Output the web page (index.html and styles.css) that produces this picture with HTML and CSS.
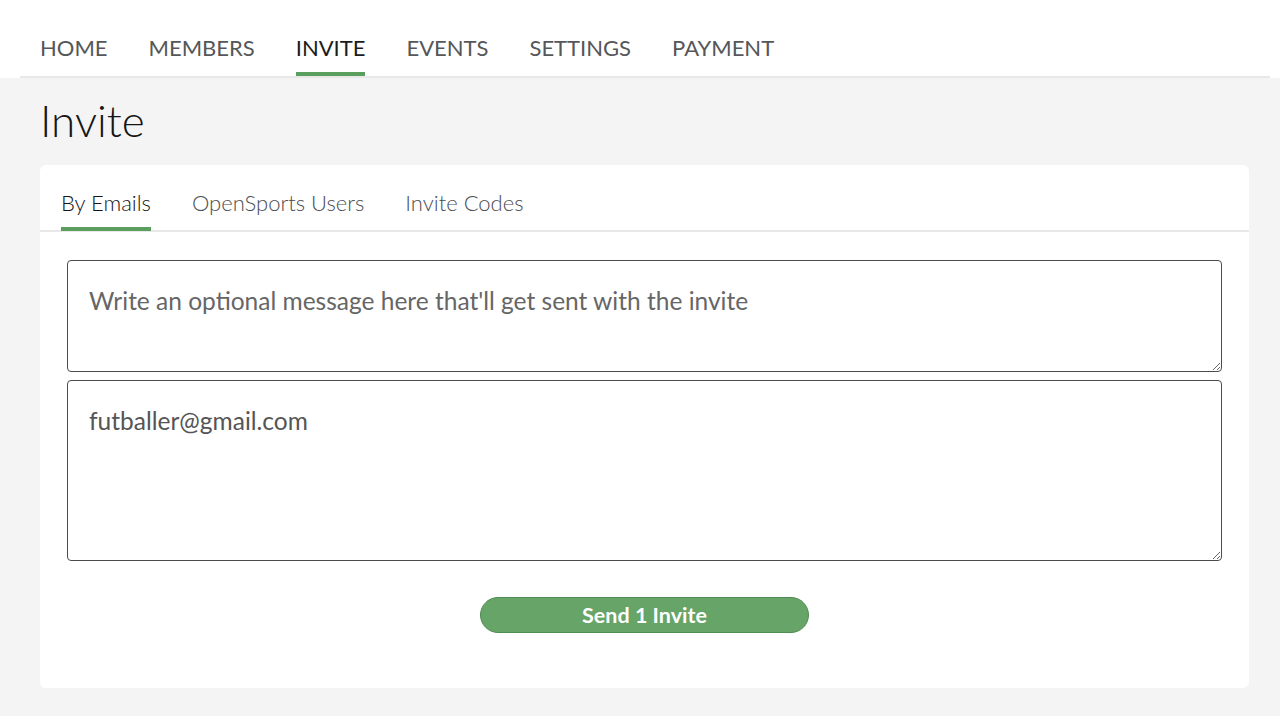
FILE: index.html
```html
<!DOCTYPE html>
<html lang="en">
<head>
<meta charset="utf-8">
<title>Invite</title>
<link rel="stylesheet" href="styles.css">
</head>
<body>
<header class="topbar">
  <nav class="mainnav">
    <a class="navlink" href="#">HOME</a>
    <a class="navlink" href="#">MEMBERS</a>
    <a class="navlink active" href="#">INVITE</a>
    <a class="navlink" href="#">EVENTS</a>
    <a class="navlink" href="#">SETTINGS</a>
    <a class="navlink" href="#">PAYMENT</a>
  </nav>
</header>
<main class="page">
  <h1 class="title">Invite</h1>
  <section class="card">
    <div class="tabs">
      <a class="tab active" href="#">By Emails</a>
      <a class="tab" href="#">OpenSports Users</a>
      <a class="tab" href="#">Invite Codes</a>
    </div>
    <div class="cardbody">
      <textarea class="field message" placeholder="Write an optional message here that'll get sent with the invite"></textarea>
      <textarea class="field emails">futballer@gmail.com</textarea>
      <div class="actions">
        <button class="sendbtn" type="button">Send 1 Invite</button>
      </div>
    </div>
  </section>
</main>
</body>
</html>
```

FILE: styles.css
```css
html, body {
  margin: 0;
  padding: 0;
}
body {
  background: #f4f4f4;
  font-family: Lato, "Open Sans", "Liberation Sans", sans-serif;
  color: #222;
}
.topbar {
  background: #ffffff;
  padding: 0 10px 0 20px;
}
.mainnav {
  display: flex;
  gap: 41px;
  padding-left: 20px;
  border-bottom: 2px solid #e8e8e8;
}
.navlink {
  display: block;
  font-size: 22px;
  line-height: 1.2;
  padding: 35px 0 11px;
  border-bottom: 4px solid transparent;
  color: #555759;
  text-decoration: none;
}
.navlink.active {
  color: #1c1c1c;
  border-bottom-color: #5b9f5e;
}
.page {
  padding: 0 31px 28px 40px;
}
.title {
  margin: 16px 0 18px;
  font-size: 44px;
  font-weight: 300;
  line-height: 1.2;
  color: #151515;
}
.card {
  background: #ffffff;
  border-radius: 6px;
}
.tabs {
  display: flex;
  gap: 41px;
  padding: 0 21px;
  border-bottom: 2px solid #e8e8e8;
}
.tab {
  display: block;
  font-size: 22px;
  font-weight: 300;
  line-height: 1.2;
  padding: 25px 0 10px;
  border-bottom: 4px solid transparent;
  color: #4a4d52;
  text-decoration: none;
  margin-bottom: -1px;
}
.tab.active {
  color: #151515;
  border-bottom-color: #5b9f5e;
}
.cardbody {
  padding: 28px 27px 55px;
}
.field {
  display: block;
  box-sizing: border-box;
  width: 100%;
  margin: 0;
  border: 1px solid #4c4c4c;
  border-radius: 4px;
  padding: 25px 21px;
  font-family: Lato, "Open Sans", "Liberation Sans", sans-serif;
  font-size: 24.5px;
  line-height: 1.2;
  color: #555555;
  background: #ffffff;
}
.field::placeholder {
  color: #666666;
  opacity: 1;
}
.message {
  height: 112px;
}
.emails {
  height: 181px;
  margin-top: 8px;
}
.actions {
  display: flex;
  justify-content: center;
  margin-top: 36px;
}
.sendbtn {
  width: 329px;
  height: 36px;
  border: 1px solid #4f8d52;
  border-radius: 18px;
  background: #66a468;
  color: #ffffff;
  font-family: Lato, "Open Sans", "Liberation Sans", sans-serif;
  font-size: 21.5px;
  font-weight: 700;
  padding: 0;
  line-height: 34px;
}
```
